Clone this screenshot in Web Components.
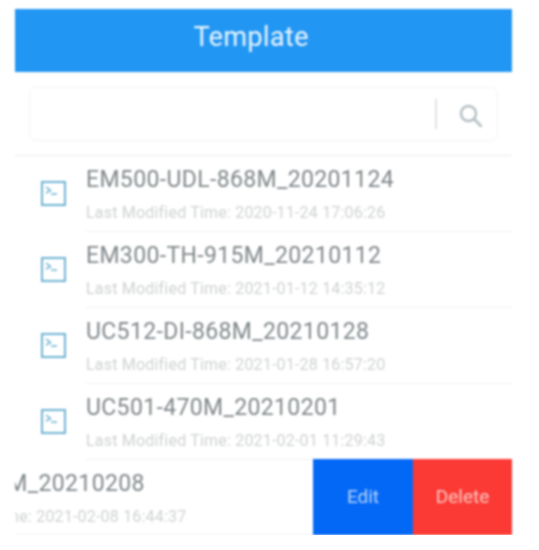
<!DOCTYPE html>
<html><head><meta charset="utf-8"><title>Template</title>
<style>
html,body{margin:0;background:#fff;font-family:Roboto,"Liberation Sans",sans-serif}
</style></head><body>
<template-app>
  <app-header>Template</app-header>
  <search-bar></search-bar>
  <template-row name="EM500-UDL-868M_20201124" time="2020-11-24 17:06:26"></template-row>
  <template-row name="EM300-TH-915M_20210112" time="2021-01-12 14:35:12"></template-row>
  <template-row name="UC512-DI-868M_20210128" time="2021-01-28 16:57:20"></template-row>
  <template-row name="UC501-470M_20210201" time="2021-02-01 11:29:43"></template-row>
  <template-row name="EM300-868M_20210208" time="2021-02-08 16:44:37" swiped></template-row>
</template-app>
<script>
function def(name, html, init){
  customElements.define(name, class extends HTMLElement{
    constructor(){super();this.attachShadow({mode:'open'}).innerHTML=html;}
    connectedCallback(){init&&init(this,this.shadowRoot);}
  });
}
def('template-app',`<style>
:host{display:block;width:497px;margin:9px 0 0 15px;filter:blur(.8px)}
</style><slot></slot>`);
def('app-header',`<style>
:host{display:flex;align-items:center;justify-content:center;height:63px;background:#2196f3;color:#e6f3fd;font-size:27px;letter-spacing:.35px;padding:0 25px 7px 0;box-sizing:border-box}
</style><slot></slot>`);
def('search-bar',`<style>
:host{display:block;padding:15px 14px 14px;border-bottom:1px solid #e9eaea}
.box{height:54px;box-sizing:border-box;border:1px solid #f3f4f4;border-radius:7px;display:flex;align-items:center;justify-content:flex-end}
.sep{width:2px;height:30px;background:#dfe3e4}
.btn{width:60px;display:flex;justify-content:center;padding-top:2px;padding-left:5px;box-sizing:border-box}
</style><div class="box"><div class="sep"></div><div class="btn">
<svg width="26" height="26" viewBox="0 0 26 26" fill="none" stroke="#b4bfc3" stroke-width="2.5"><circle cx="11.5" cy="11.5" r="7.5"/><path d="M17 17l7 7" stroke-linecap="round"/></svg>
</div></div>`);
def('template-row',`<style>
:host{display:flex;height:76px;overflow:hidden}
:host([swiped]){margin-top:-1px}
.main{flex:0 0 100%;display:flex;align-items:center;box-sizing:border-box;padding-left:26px}
:host([swiped]) .main{margin-left:-199px}
.icon{flex:none;width:25px;height:25px;margin:0 20px 2px 0}
.text{flex:1;min-width:0;height:100%;box-sizing:border-box;border-bottom:1px solid #eff0f0;display:flex;flex-direction:column;padding-top:9px;white-space:nowrap}
:host([swiped]) .text{padding-top:10px}
.name{font-size:23px;line-height:30px;color:#80878a;letter-spacing:.36px}
.time{font-size:16px;line-height:18px;margin-top:9px;color:#cfd1d2;letter-spacing:.2px}
.actions{display:none;flex:none}
:host([swiped]) .actions{display:flex}
.actions div{display:flex;align-items:center;justify-content:center;height:76px;font-size:19px;padding-bottom:2px;box-sizing:border-box}
.edit{width:100px;background:#0468f6;color:#b4d4fc}
.del{width:99px;background:#fb3a35;color:#fdc6c0}
</style>
<div class="main">
<svg class="icon" viewBox="0 0 25 25" fill="none" stroke="#6fb2d3"><rect x="1" y="1" width="23" height="23" stroke-width="2"/><path d="M5 6l4.5 3.5L5 12M10 13h6" stroke-width="1.5"/></svg>
<div class="text"><span class="name"></span><span class="time"></span></div>
</div>
<div class="actions"><div class="edit">Edit</div><div class="del">Delete</div></div>`,
(h,s)=>{s.querySelector('.name').textContent=h.getAttribute('name');
s.querySelector('.time').textContent='Last Modified Time: '+h.getAttribute('time');});
</script>
</body></html>
